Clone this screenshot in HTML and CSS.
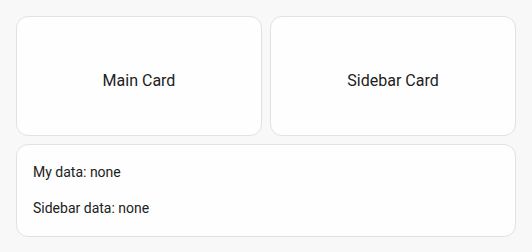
FILE: index.html
```html
<!DOCTYPE html>
<html>
<head>
<meta charset="utf-8">
<link rel="stylesheet" href="styles.css">
</head>
<body>
<div class="page">
  <div class="row">
    <div class="card title-card">Main Card</div>
    <div class="card title-card">Sidebar Card</div>
  </div>
  <div class="card data-card">
    <p class="line">My data: none</p>
    <p class="line">Sidebar data: none</p>
  </div>
</div>
</body>
</html>
```

FILE: styles.css
```css
html, body {
  margin: 0;
  padding: 0;
  background: #f8f8f8;
}
body {
  font-family: Roboto, "Liberation Sans", sans-serif;
  color: #212121;
}
.page {
  padding: 16px;
  display: flex;
  flex-direction: column;
  gap: 8px;
}
.row {
  display: grid;
  grid-template-columns: 1fr 1fr;
  gap: 8px;
}
.card {
  background: #fefefe;
  border: 1px solid #e2e2e2;
  border-radius: 12px;
  box-sizing: border-box;
}
.title-card {
  height: 120px;
  padding-top: 8px;
  display: flex;
  align-items: center;
  justify-content: center;
  font-size: 16px;
}
.data-card {
  height: 93px;
  padding: 17px 16px;
  display: flex;
  flex-direction: column;
  gap: 16px;
  font-size: 14px;
}
.line {
  margin: 0;
  line-height: 20px;
}
```
